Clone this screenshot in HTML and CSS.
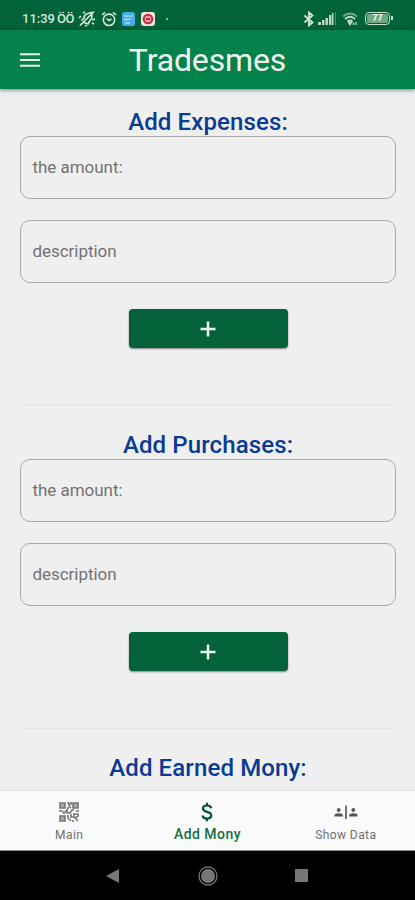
FILE: index.html
```html
<!DOCTYPE html>
<html lang="en">
<head>
<meta charset="utf-8">
<title>Tradesmes</title>
<link rel="stylesheet" href="styles.css">
</head>
<body>
<div class="screen">
  <header class="status">
    <div class="status-left">
      <span class="clock">11:39</span>
      <span class="carrier">ÖÖ</span>
      <svg class="mute" width="18" height="17" viewBox="0 0 18 17" fill="none" stroke="#d5e8d9" stroke-width="1.7"><path d="M3.500 10.500L6 8Q6.500 4 10 3.500L13 2.500L14 5Q14.500 8 12 10.500L10 14L4.500 12M2 15.500L16 1.500M1 8L3 6M7 15.500L9 16M14 10L17 9M14 13L16 14M5 3L7 2"/></svg>
      <svg class="alarm" width="16" height="16" viewBox="0 0 16 16" fill="none" stroke="#d5e8d9" stroke-width="1.6"><circle cx="8" cy="8.800" r="5.700"/><path d="M1 4L4 1.300M15 4L12 1.300M5.500 7.500L8 9.500L10.500 8"/></svg>
      <svg class="app-blue" width="13" height="14" viewBox="0 0 13 14"><rect width="13" height="14" rx="2.500" fill="#43aeea"/><path d="M2 4H7M8 4H11M2 7.500H6L9 6.500M3 11H8" stroke="#a9ddf5" stroke-width="1.300" fill="none"/></svg>
      <svg class="app-red" width="14" height="14" viewBox="0 0 14 14"><rect width="14" height="14" rx="3" fill="#f3e4df"/><circle cx="7" cy="7" r="4.300" fill="#e6a3a3" stroke="#c42a3c" stroke-width="2"/><path d="M5 7H9" stroke="#c42a3c" stroke-width="2"/></svg>
      <span class="dot"></span>
    </div>
    <div class="status-right">
      <svg width="12" height="16" viewBox="0 0 12 16" fill="none" stroke="#d5e8d9" stroke-width="1.800"><path d="M1.500 4.500L9.500 11.500L6 14.500V1.500L9.500 4.500L1.500 11.500"/></svg>
      <svg class="signal" width="19" height="13" viewBox="0 0 19 13"><path d="M0 10h3v3H0zM4 8h2.500v5H4zM7.500 6H10v7H7.500zM11 3h2.500v10H11zM14 1h1.500v12H14z" fill="#b7d6bf"/><path d="M17.500 0V13" stroke="#4b9063"/></svg>
      <svg class="wifi" width="17" height="14" viewBox="0 0 17 14" fill="none" stroke="#c5dfcb" stroke-width="1.700"><path d="M1 4.500Q8 -1.500 15 4.500" stroke="#75aa84"/><path d="M3 7Q8 2.500 13 7M5.500 9.500Q8 7.500 10.500 9.500"/><path d="M6.500 10.500H9.500L8 12.800ZM11.500 10.500V13M14 10V13" stroke-width="1.300"/></svg>
      <div class="battery"><span>77</span></div>
    </div>
  </header>
  <div class="appbar">
    <svg class="menu" width="20" height="14" viewBox="0 0 20 14"><path d="M0 1.200H20M0 7H20M0 12.800H20" stroke="#e9f5ea" stroke-width="2"/></svg>
    <h1>Tradesmes</h1>
  </div>
  <main>
    <section>
      <h2>Add Expenses:</h2>
      <div class="field">the amount:</div>
      <div class="field">description</div>
      <div class="button"><svg width="16" height="16" viewBox="0 0 16 16"><path d="M8 .5V15.500M.5 8H15.500" stroke="#edf7ed" stroke-width="2.500"/></svg></div>
    </section>
    <section>
      <h2>Add Purchases:</h2>
      <div class="field">the amount:</div>
      <div class="field">description</div>
      <div class="button"><svg width="16" height="16" viewBox="0 0 16 16"><path d="M8 .5V15.500M.5 8H15.500" stroke="#edf7ed" stroke-width="2.500"/></svg></div>
    </section>
    <section>
      <h2>Add Earned Mony:</h2>
    </section>
  </main>
  <nav class="tabs">
    <div class="tab">
      <svg width="20" height="20" viewBox="0 0 20 20" fill="none" stroke="#777" stroke-width="1.600"><path d="M1 1H6V6H1ZM14 1H19V6H14ZM1 14H6V19H1Z" fill="#aaa"/><path d="M8 1H10V4L12 6M12 0V3M8 6H10M0 9H3L5 11L8 8V11H11L13 8H15M17 9H20M9 13V16L12 19M12 12V15H15V12H19V14L16 16L19 19M14 18V20"/></svg>
      <span>Main</span>
    </div>
    <div class="tab active">
      <svg width="20" height="20" viewBox="0 0 20 20" fill="none" stroke="#005330" stroke-width="2.200"><path d="M14.300 6.200Q13.500 3.500 10 3.500Q6 3.500 6 6.300Q6 9 10 9.800Q14.300 10.700 14.300 13.600Q14.300 16.500 10 16.500Q6 16.500 5.500 13.500M10 .7V4M10 16V19.300"/></svg>
      <span>Add Mony</span>
    </div>
    <div class="tab">
      <svg width="24" height="20" viewBox="0 0 24 20" fill="#555"><circle cx="4.700" cy="8" r="1.900"/><path d="M.5 14.500V13.500Q.5 11.300 4.700 11.300T8.900 13.500V14.500ZM11.200 3.500H12.800V17H11.200Z"/><circle cx="19.300" cy="8" r="1.900"/><path d="M15.100 14.500V13.500Q15.100 11.300 19.300 11.300T23.500 13.500V14.500Z"/></svg>
      <span>Show Data</span>
    </div>
  </nav>
  <footer class="system">
    <svg class="back" width="14" height="16" viewBox="0 0 14 16"><path d="M0 8L13 1V15Z" fill="#777"/></svg>
    <svg class="home" width="20" height="20" viewBox="0 0 20 20"><circle cx="10" cy="10" r="9" fill="none" stroke="#777" stroke-width="1.300"/><circle cx="10" cy="10" r="7" fill="#777"/></svg>
    <svg class="recent" width="13" height="13" viewBox="0 0 13 13"><path d="M0 0H13V13H0Z" fill="#777"/></svg>
  </footer>
</div>
</body>
</html>
```
FILE: styles.css
```css
* { box-sizing: border-box; }
body { margin: 0; font-family: Roboto, sans-serif; }
svg { display: block; flex: none; }
h1, h2 { margin: 0; font-weight: 400; white-space: nowrap; }
.screen { width: 415px; height: 900px; display: flex; flex-direction: column; overflow: hidden; background: #efefef; }
.status { height: 30px; flex: none; background: #026239; color: #d5e8d9; display: flex; justify-content: space-between; padding: 8px 23px 0 22px; }
.status-left, .status-right { display: flex; align-items: center; height: 21px; }
.status-right { padding-right: 2px; }
.clock { font-size: 13px; font-weight: 500; width: 32px; white-space: nowrap; }
.carrier { font-size: 13px; font-weight: 500; letter-spacing: -.4px; margin-left: 3px; width: 18px; white-space: nowrap; }
.mute { margin-left: 3px; }
.alarm { margin-left: 5px; }
.app-blue { margin-left: 5px; }
.app-red { margin-left: 6px; }
.dot { width: 2px; height: 2px; border-radius: 1px; background: #b7d6bf; margin-left: 11px; }
.signal { margin-left: 3px; }
.wifi { margin-left: 5px; }
.battery { width: 25px; height: 13px; margin-left: 6px; border: 1.5px solid #c5dfcb; border-radius: 4px; padding: 1px; position: relative; }
.battery::after { content: ""; position: absolute; right: -4px; top: 3px; width: 2px; height: 4px; background: #c5dfcb; }
.battery span { display: block; height: 9px; background: #73a783; border-radius: 2px; font-size: 9px; line-height: 9px; font-weight: 700; text-align: center; color: #f0faef; }
.appbar { height: 59px; flex: none; background: #03824b; display: grid; grid-template-columns: 1fr auto 1fr; align-items: center; padding: 0 20px; box-shadow: 0 1px 4px rgba(0,0,0,.5); z-index: 1; }
h1 { font-size: 32px; line-height: 40px; letter-spacing: -.15px; color: #eef8ee; }
main { flex: 1; min-height: 0; overflow: hidden; padding: 19px 19px 0 20px; }
section { height: 298px; border-bottom: 1px solid #e5e5e5; margin-bottom: 25px; }
section:last-child { height: 28px; margin: 0; border: 0; }
h2 { font-size: 24px; line-height: 28px; font-weight: 500; letter-spacing: .12px; color: #093b93; text-align: center; }
.field { height: 63px; margin-bottom: 21px; border: 1px solid #aaa; border-radius: 10px; display: flex; align-items: center; padding: 0 11.5px 2px; font-size: 17px; letter-spacing: -.04px; color: #727272; }
.button { width: 159px; height: 39px; margin: 26px auto 0; background: #036239; border-radius: 4px; display: flex; align-items: center; justify-content: center; box-shadow: 0 1px 2px rgba(0,0,0,.45); }
.tabs { height: 60px; flex: none; background: #fafafa; border-bottom: 1px solid #888; display: grid; grid-template-columns: repeat(3, 1fr); box-shadow: 0 -1px 2px rgba(0,0,0,.06); }
.tab { display: flex; flex-direction: column; align-items: center; padding-top: 11px; color: #707070; font-size: 12px; line-height: 14px; font-weight: 400; letter-spacing: .4px; white-space: nowrap; }
.tab span { margin-top: 6px; }
.tab.active { color: #117045; font-size: 14px; font-weight: 500; letter-spacing: .45px; }
.tab.active span { margin-top: 5px; }
.system { height: 49px; flex: none; background: #000; display: flex; align-items: center; padding-left: 106px; }
.home { margin-left: 78px; }
.recent { margin-left: 77px; }
```
